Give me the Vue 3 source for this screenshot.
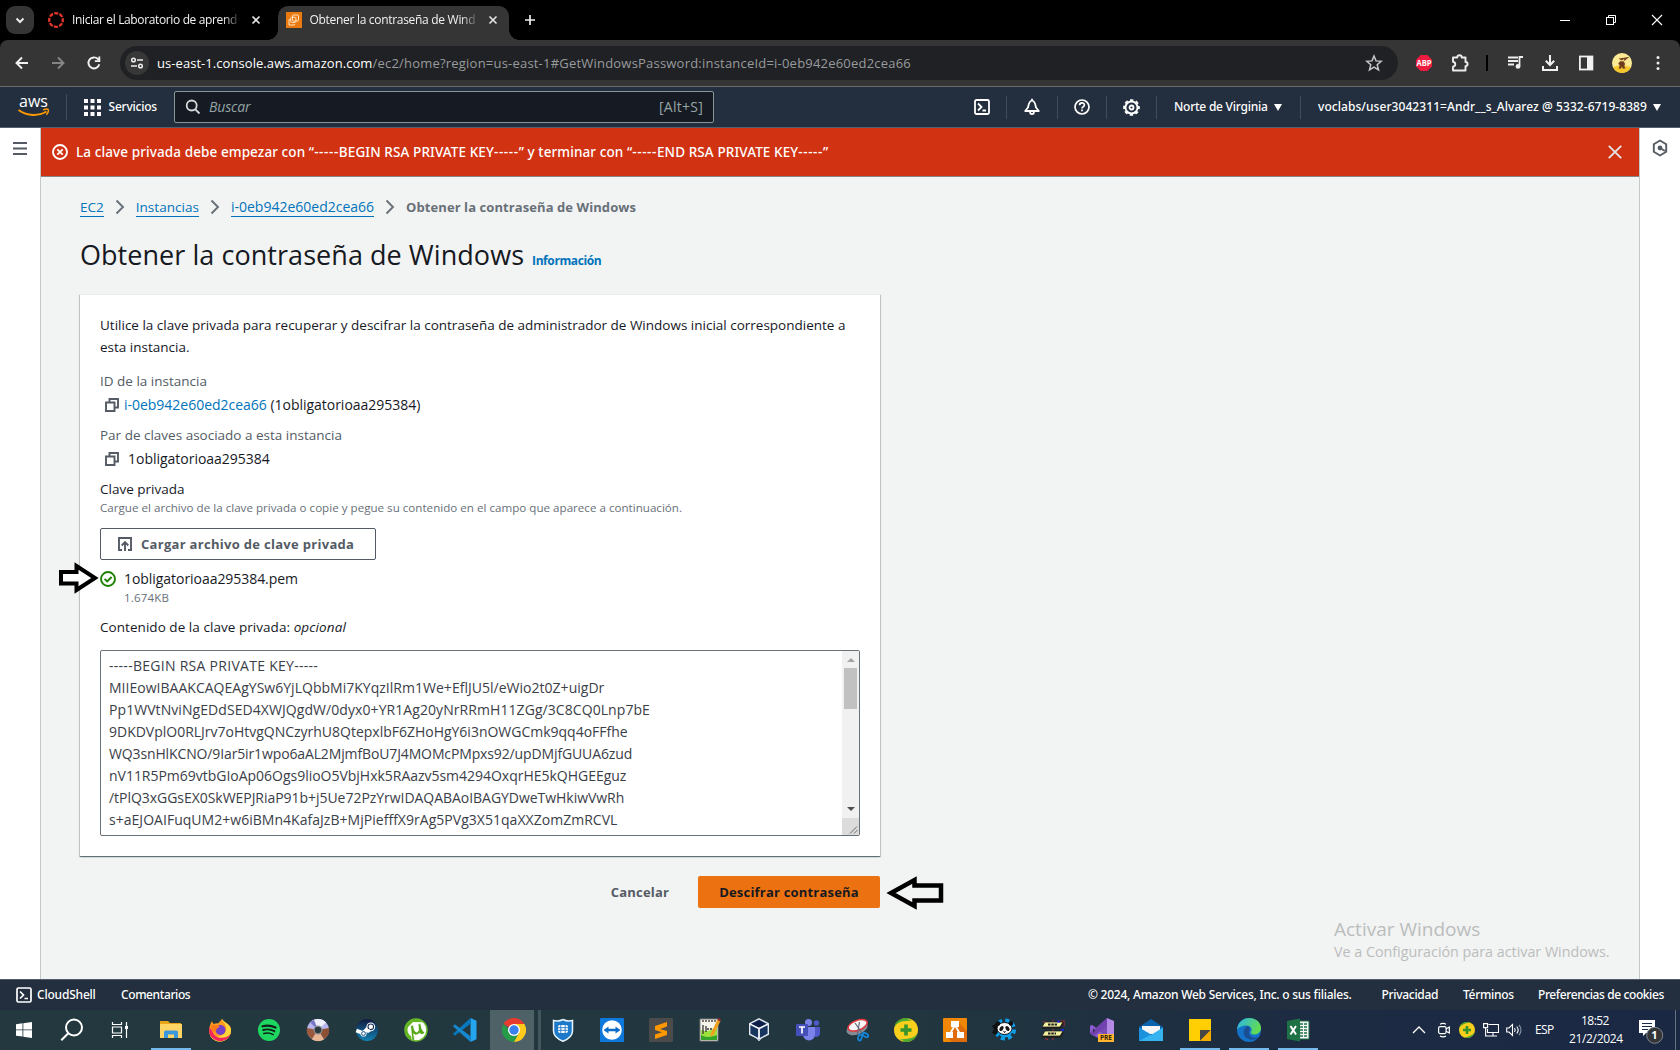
<script setup>
const keyLines = [
  { text: '-----BEGIN RSA PRIVATE KEY-----', track: 0.28 },
  { text: 'MIIEowIBAAKCAQEAgYSw6YjLQbbMi7KYqzIlRm1We+EflJU5l/eWio2t0Z+uigDr', track: 0.02 },
  { text: 'Pp1WVtNviNgEDdSED4XWJQgdW/0dyx0+YR1Ag20yNrRRmH11ZGg/3C8CQ0Lnp7bE', track: 0.07 },
  { text: '9DKDVplO0RLJrv7oHtvgQNCzyrhU8QtepxlbF6ZHoHgY6i3nOWGCmk9qq4oFFfhe', track: -0.01 },
  { text: 'WQ3snHlKCNO/9Iar5ir1wpo6aAL2MjmfBoU7J4MOMcPMpxs92/upDMjfGUUA6zud', track: -0.13 },
  { text: 'nV11R5Pm69vtbGIoAp06Ogs9lioO5VbjHxk5RAazv5sm4294OxqrHE5kQHGEEguz', track: -0.02 },
  { text: '/tPlQ3xGGsEX0SkWEPJRiaP91b+j5Ue72PzYrwIDAQABAoIBAGYDweTwHkiwVwRh', track: -0.04 },
  { text: 's+aEJOAIFuqUM2+w6iBMn4KafaJzB+MjPiefffX9rAg5PVg3X51qaXXZomZmRCVL', track: 0.03 }
]
</script>

<template>
  <div class="screen">
    <!-- Browser tab strip -->
    <div class="tabstrip">
      <div class="tab-search">
        <svg width="28" height="28" viewBox="0 0 28 28"><path d="M10.500 12.500 14 16l3.500-3.500" fill="none" stroke="#e8e8e8" stroke-width="2" /></svg>
      </div>
      <div class="tab idle">
        <svg width="16" height="16" viewBox="0 0 16 16"><circle cx="8" cy="8" r="6.800" fill="none" stroke="#e2352b" stroke-width="2.300" stroke-dasharray="4.100 1.240" stroke-dashoffset="2" /></svg>
        <span class="tab-title">Iniciar el Laboratorio de aprend</span>
        <svg class="tab-x" width="10" height="10" viewBox="0 0 10 10"><path d="m1.500 1.500 7 7m0-7-7 7" stroke="#e6e6e6" stroke-width="1.600" /></svg>
      </div>
      <div class="tab current">
        <svg width="16" height="16" viewBox="0 0 16 16">
          <rect width="16" height="16" fill="#ea7a10" />
          <g fill="none" stroke="#ffe3c0" stroke-width="1"><rect x="6.500" y="3" width="6" height="6" rx=".8" /><rect x="4.700" y="5.200" width="5.200" height="5.200" rx=".8" /><path d="M3.800 7.500H3V13h5.500v-1" /></g>
        </svg>
        <span class="tab-title">Obtener la contraseña de Wind</span>
        <svg class="tab-x" width="10" height="10" viewBox="0 0 10 10"><path d="m1.500 1.500 7 7m0-7-7 7" stroke="#e6e6e6" stroke-width="1.600" /></svg>
      </div>
      <svg class="new-tab" width="12" height="12" viewBox="0 0 12 12"><path d="M6 1v10M1 6h10" stroke="#eee" stroke-width="1.700" /></svg>
      <div class="win-controls">
        <svg width="12" height="12" viewBox="0 0 12 12"><path d="M1 6.500h10" stroke="#fff" /></svg>
        <svg width="12" height="12" viewBox="0 0 12 12" fill="none" stroke="#fff"><rect x="1.500" y="3.500" width="7" height="7" /><path d="M3.500 3.500v-2h7v7h-2" /></svg>
        <svg width="12" height="12" viewBox="0 0 12 12"><path d="m1 1 10 10M11 1 1 11" stroke="#fff" stroke-width="1.100" /></svg>
      </div>
    </div>

    <!-- Browser toolbar -->
    <div class="toolbar-wrap">
      <div class="toolbar">
        <div class="nav-buttons">
          <svg width="16" height="16" viewBox="0 0 16 16" fill="none" stroke="#f1f1f1" stroke-width="1.900"><path d="M14 8H3M8 2.500 2.500 8 8 13.500" /></svg>
          <svg width="16" height="16" viewBox="0 0 16 16" fill="none" stroke="#858585" stroke-width="1.900"><path d="M2 8h11M8 2.500 13.500 8 8 13.500" /></svg>
          <svg width="16" height="16" viewBox="0 0 16 16" fill="none" stroke="#f1f1f1" stroke-width="1.900"><path d="M13.300 9.200A5.500 5.500 0 1 1 12 4.200l1.200 1.300" /><path d="M13.300 1.500v4.600H8.800" /></svg>
        </div>
        <div class="omnibox">
          <span class="site-info">
            <svg width="14" height="14" viewBox="0 0 14 14" fill="none" stroke="#eee" stroke-width="1.500"><circle cx="3.500" cy="4" r="1.800" /><path d="M7 4h6M1 10h6" /><circle cx="10.500" cy="10" r="1.800" /></svg>
          </span>
          <span class="url"><span class="host">us-east-1.console.aws.amazon.com</span><span class="path">/ec2/home?region=us-east-1#GetWindowsPassword:instanceId=i-0eb942e60ed2cea66</span></span>
          <svg width="18" height="18" viewBox="0 0 18 18" fill="none" stroke="#c4c7c9" stroke-width="1.500"><path d="m9 2 2 4.900 5.200.4-4 3.400 1.300 5.200L9 13.100l-4.500 2.800 1.300-5.200-4-3.400L7 6.900z" /></svg>
        </div>
        <div class="extensions">
          <svg width="18" height="18" viewBox="0 0 18 18"><path d="M5.700 1h6.600L17 5.700v6.600L12.300 17H5.700L1 12.300V5.700z" fill="#ee1c3f" /><text x="9" y="11.900" text-anchor="middle" class="abp" textLength="15" lengthAdjust="spacingAndGlyphs">ABP</text></svg>
          <svg class="ext" width="20" height="20" viewBox="0 0 20 20" fill="none" stroke="#ececec" stroke-width="1.900"><path d="M3 4.500h4.300c0-3 4.400-3 4.400 0H15.500V9c2.800.2 2.800 4 0 4.200v4.300H3v-3.800c3-.6 3-4.400 0-4.900z" stroke-linejoin="round" /></svg>
          <i class="ext-sep"></i>
          <svg class="music" width="18" height="18" viewBox="0 0 18 18"><path d="M2 3.500h10M2 7h10M2 10.500h6M13.500 12V3h3.500" fill="none" stroke="#eee" stroke-width="1.800" /><circle cx="12" cy="12.400" r="2.400" fill="#eee" /></svg>
          <svg class="download" width="18" height="18" viewBox="0 0 18 18" fill="none" stroke="#f1f1f1" stroke-width="2"><path d="M9 1v9.500M4.800 6.800 9 11l4.200-4.200M2 12v4h14v-4" /></svg>
          <svg class="panel" width="16" height="16" viewBox="0 0 16 16"><rect x="1.900" y="1.500" width="12.500" height="13" fill="none" stroke="#f1f1f1" stroke-width="1.800" /><path d="M9 1h6v14H9z" fill="#f1f1f1" /></svg>
          <svg class="avatar" width="20" height="20" viewBox="0 0 20 20"><circle cx="10" cy="10" r="10" fill="#fbe993" /><path d="M1 14.300a10 10 0 0 0 18 0C13 12 7 12 1 14.300" fill="#f6c72c" /><path d="m7 5.500 2 1.500h1.500l1.500-1.500.3 2.300L17 4M8 8.500h3.500l1.500 2.500-.8 1.500.8 3h-2l-1-2-1.300 2H7l.8-3L6.500 10.500z" fill="#6f3b1d" stroke="#8b5a2b" stroke-width=".6" /></svg>
          <svg class="menu" width="4" height="16" viewBox="0 0 4 16" fill="#eee"><circle cx="2" cy="2.500" r="1.500" /><circle cx="2" cy="8" r="1.500" /><circle cx="2" cy="13.500" r="1.500" /></svg>
        </div>
      </div>
    </div>

    <!-- Console navigation -->
    <header class="console-nav">
      <div class="logo">
        <svg width="34" height="26" viewBox="0 0 34 26"><text x="16.500" y="13" text-anchor="middle" class="aws" textLength="29" lengthAdjust="spacingAndGlyphs">aws</text><path d="M1.500 16c9 6.300 20 6.300 28 1.500" fill="none" stroke="#f90" stroke-width="2" /><path d="M26 15.800c2.500-.8 5-.8 5.300 0 .3.900-.6 3.500-2 5" fill="none" stroke="#f90" stroke-width="1.400" /></svg>
      </div>
      <div class="services">
        <svg width="17" height="17" viewBox="0 0 17 17" fill="#fff"><path d="M0 0h4v4H0zM6.500 0h4v4h-4zM13 0h4v4h-4zM0 6.500h4v4H0zM6.500 6.500h4v4h-4zM13 6.500h4v4h-4zM0 13h4v4H0zM6.500 13h4v4h-4zM13 13h4v4h-4z" /></svg>
        <span>Servicios</span>
      </div>
      <div class="search">
        <svg width="16" height="16" viewBox="0 0 16 16" fill="none" stroke="#d5dbdb" stroke-width="1.800"><circle cx="6.700" cy="6.500" r="5" /><path d="m10.300 10.300 4.200 4.200" /></svg>
        <em>Buscar</em>
        <span>[Alt+S]</span>
      </div>
      <div class="nav-icons">
        <div class="nav-icon w49"><svg width="16" height="16" viewBox="0 0 16 16" fill="none" stroke="#fff" stroke-width="1.800"><rect x="1" y="1" width="14" height="14" rx="1.500" /><path d="m4 4.500 3.500 3.500L4 11.500M8.500 11.500H12" /></svg></div>
        <div class="nav-icon w51"><svg width="16" height="18" viewBox="0 0 16 18" fill="none" stroke="#fff" stroke-width="1.800" stroke-linejoin="round"><path d="M8 2.500C4.500 3.500 4.500 8 4 9.500L1.200 13h13.600L12 9.500C11.500 8 11.500 3.500 8 2.500z" /><path d="M8 .8v2M6 13.500c0 3.500 4 3.500 4 0" /></svg></div>
        <div class="nav-icon w49"><svg width="16" height="16" viewBox="0 0 16 16" fill="none" stroke="#fff" stroke-width="1.700"><circle cx="8" cy="8" r="7" /><path d="M5.600 6.300C5.600 3 10.400 3.200 10.400 6c0 1.800-2.400 1.700-2.400 3.600M8 10.600v1.700" /></svg></div>
        <div class="nav-icon w50"><svg width="17" height="17" viewBox="0 0 17 17" fill="none" stroke="#fff"><circle cx="8.500" cy="8.500" r="2" stroke-width="1.800" /><circle cx="8.500" cy="8.500" r="6" stroke-width="1.800" /><circle cx="8.500" cy="8.500" r="7.400" stroke-width="1.900" stroke-dasharray="3.300 2.511" stroke-dashoffset="1.650" /></svg></div>
      </div>
      <div class="region"><span>Norte de Virginia</span><i class="caret"></i></div>
      <div class="account"><span>voclabs/user3042311=Andr__s_Alvarez @ 5332-6719-8389</span><i class="caret"></i></div>
    </header>

    <!-- Page -->
    <div class="page">
      <aside class="side left"><svg width="14" height="13" viewBox="0 0 14 13"><path d="M0 1h14M0 6.500h14M0 12h14" stroke="#545b64" stroke-width="1.900" /></svg></aside>
      <main>
        <div class="flash">
          <svg width="16" height="16" viewBox="0 0 16 16" fill="none" stroke="#fff" stroke-width="1.900"><circle cx="8" cy="8" r="7" /><path d="m5.300 5.300 5.400 5.400m0-5.400-5.400 5.400" /></svg>
          <span>La clave privada debe empezar con “<i>-----</i>BEGIN RSA PRIVATE KEY<i>-----</i>” y terminar con “<i>-----</i>END RSA PRIVATE KEY<i>-----</i>”</span>
          <svg class="dismiss" width="14" height="14" viewBox="0 0 14 14"><path d="m.8.8 12.400 12.400m0-12.400L.8 13.200" stroke="#e3e3e3" stroke-width="1.900" /></svg>
        </div>
        <div class="content">
          <nav class="crumbs">
            <a class="c1">EC2</a>
            <svg width="10" height="16" viewBox="0 0 10 16"><path d="m1.500 1.500 6.500 6.500-6.500 6.500" fill="none" stroke="#687078" stroke-width="1.900" /></svg>
            <a class="c2">Instancias</a>
            <svg width="10" height="16" viewBox="0 0 10 16"><path d="m1.500 1.500 6.500 6.500-6.500 6.500" fill="none" stroke="#687078" stroke-width="1.900" /></svg>
            <a class="c3">i-0eb942e60ed2cea66</a>
            <svg width="10" height="16" viewBox="0 0 10 16"><path d="m1.500 1.500 6.500 6.500-6.500 6.500" fill="none" stroke="#687078" stroke-width="1.900" /></svg>
            <b>Obtener la contraseña de Windows</b>
          </nav>
          <div class="heading"><h1>Obtener la contraseña de Windows</h1><a>Información</a></div>

          <section class="card">
            <p class="intro">Utilice la clave privada para recuperar y descifrar la contraseña de administrador de Windows inicial correspondiente a esta instancia.</p>
            <div class="label">ID de la instancia</div>
            <div class="value">
              <svg width="14" height="14" viewBox="0 0 14 14" fill="none" stroke="#545b64" stroke-width="1.900"><path d="M1 4.500h8.500V13H1z" /><path d="M4.500 4.500V1H13v8.500H9.500" /></svg>
              <span><a>i-0eb942e60ed2cea66</a> (1obligatorioaa295384)</span>
            </div>
            <div class="label pair">Par de claves asociado a esta instancia</div>
            <div class="value wide">
              <svg width="14" height="14" viewBox="0 0 14 14" fill="none" stroke="#545b64" stroke-width="1.900"><path d="M1 4.500h8.500V13H1z" /><path d="M4.500 4.500V1H13v8.500H9.500" /></svg>
              <span>1obligatorioaa295384</span>
            </div>
            <div class="field-label">Clave privada</div>
            <div class="hint">Cargue el archivo de la clave privada o copie y pegue su contenido en el campo que aparece a continuación.</div>
            <button class="upload">
              <svg width="14" height="14" viewBox="0 0 14 14" fill="none" stroke="#545b64" stroke-width="1.900"><path d="M4 13H1V1h12v12h-3" /><path d="M7 14V5.500M3.700 8.500 7 5.200l3.300 3.300" /></svg>
              <span>Cargar archivo de clave privada</span>
            </button>
            <div class="file">
              <svg width="16" height="16" viewBox="0 0 16 16" fill="none" stroke="#1d8102" stroke-width="1.900"><circle cx="8" cy="8" r="7" /><path d="m4.600 7.800 2.600 2.600 4.400-4.400" /></svg>
              <div><div class="file-name">1obligatorioaa295384.pem</div><div class="file-size">1.674KB</div></div>
            </div>
            <div class="key-label">Contenido de la clave privada: <em>opcional</em></div>
            <div class="textarea">
              <div class="key"><div v-for="l in keyLines" :key="l.text" :style="{ letterSpacing: l.track + 'px' }">{{ l.text }}</div></div>
              <div class="scroll">
                <i class="up"></i><i class="thumb"></i><i class="down"></i>
                <div class="corner"><svg width="17" height="17" viewBox="0 0 17 17"><path d="m8 15.500 7-7M12 15.500l3.500-3.500" stroke="#6b6b6b" /></svg></div>
              </div>
            </div>
          </section>

          <div class="actions"><button class="cancel">Cancelar</button><button class="primary">Descifrar contraseña</button></div>
        </div>
      </main>
      <aside class="side right"><svg width="16" height="18" viewBox="0 0 16 18"><path d="m8 1.500 6.200 3.700v7.600L8 16.500l-6.200-3.700V5.200z" fill="none" stroke="#545b64" stroke-width="1.900" /><path d="m8 9 5 3" stroke="#545b64" stroke-width="2" /><circle cx="8" cy="9" r="2.400" fill="#545b64" /></svg></aside>
    </div>

    <!-- Console footer -->
    <footer>
      <svg width="16" height="16" viewBox="0 0 16 16" fill="none" stroke="#fff" stroke-width="1.700"><rect x="1" y="1" width="14" height="14" rx="1.500" /><path d="m4 4.500 3.500 3.500L4 11.500M8.500 11.500H12" /></svg>
      <span class="f1">CloudShell</span><span class="f2">Comentarios</span>
      <span class="f3">© 2024, Amazon Web Services, Inc. o sus filiales.</span>
      <span class="f4">Privacidad</span><span class="f5">Términos</span><span class="f6">Preferencias de cookies</span>
    </footer>

    <!-- Windows taskbar -->
    <div class="taskbar">
      <div class="cell sys"><svg width="16" height="16" viewBox="0 0 16 16" fill="#fff"><path d="M0 2.200 6.500 1.300v6.200H0zM7.300 1.200 16 0v7.500H7.300zM0 8.300h6.500v6.300L0 13.700zM7.300 8.300H16V16l-8.700-1.200z" /></svg></div>
      <div class="cell sys"><svg width="24" height="24" viewBox="0 0 24 24" fill="none" stroke="#fff" stroke-width="2"><circle cx="14" cy="9.500" r="8" /><path d="m8.300 15.200-7 7" /></svg></div>
      <div class="cell sys"><svg width="18" height="16" viewBox="0 0 18 16" fill="none" stroke="#fff" stroke-width="1.200"><path d="M1.500 0v2.500h9V0M1.500 16v-2.500h9V16M1.500 5h9v6h-9zM15.500 0v16" /><path d="M14 4h3v3h-3z" fill="#fff" stroke="none" /></svg></div>
      <div class="apps">
        <div class="cell run"><svg width="24" height="24" viewBox="0 0 24 24"><path d="M1 3h8l2 2h11v15H1z" fill="#e8a317" /><path d="M1 6h22v14H1z" fill="#ffd566" /><path d="M5 20v-6q0-1.500 1.500-1.500h11q1.500 0 1.500 1.500v6h-4v-3.500H9V20z" fill="#3c98dd" /></svg></div>
        <div class="cell"><svg width="24" height="24" viewBox="0 0 24 24"><path d="M14 .8c1 4 8.500 4.500 9 11A11 11 0 0 1 1 13c0-3 .8-6 3-10 .5 2 1 2.500 2 3 1.500-1 3-1 4-.5C11 4 13 3 14 .8" fill="#ff9a1f" /><path d="M14 .8c0 4 3.500 4 4 8 2 8-9 12-16 9a11.200 11.200 0 0 0 21-5.800C23 6 16 5 14 .8" fill="#ffd53a" /><path d="M1.300 15c3 10 18 11 21 1-5 6-16 5-18-3L1 9z" fill="#f4255f" /><circle cx="12.500" cy="12" r="5" fill="#7540c8" /><path d="M2.500 8c3-2 6-.5 8-.5 2 .5 0 2.500-1.500 3l-1.500 3c-2 .5-4-2-5-5.500" fill="#ff7a18" /></svg></div>
        <div class="cell"><svg width="24" height="24" viewBox="0 0 24 24"><circle cx="12" cy="12" r="11" fill="#1ed760" /><g fill="none" stroke="#10221a" stroke-linecap="round"><path d="M5.500 8.300c4.500-1.200 9-.8 13 1.200" stroke-width="2.200" /><path d="M6.200 12c3.800-1.100 7.800-.7 11.200 1.200" stroke-width="1.900" /><path d="M6.800 15.500c3.300-.9 6.500-.6 9.400 1.100" stroke-width="1.600" /></g></svg></div>
        <div class="cell"><svg width="24" height="24" viewBox="0 0 24 24"><circle cx="12" cy="12" r="11" fill="#b8b6ed" /><path d="M12 12 4 4.500A11 11 0 0 1 20 4.500z" fill="#f0f0fb" /><path d="m12 12-4-10.300A11 11 0 0 0 4 4.500z" fill="#7774c9" /><path d="M12 12 1 10a11 11 0 0 0 5 11.200z" fill="#9b5a3d" /><path d="m12 12-6 9.200a11 11 0 0 0 12 0z" fill="#e8b692" /><path d="m12 12 6 9.200A11 11 0 0 0 23 10z" fill="#8d4f34" /><circle cx="12" cy="12" r="4.500" fill="#8c8c91" /><circle cx="12" cy="12" r="3.200" fill="#293b41" /></svg></div>
        <div class="cell"><svg width="24" height="24" viewBox="0 0 24 24"><defs><linearGradient id="stm" x1="0" y1="0" x2="0" y2="1"><stop offset="0" stop-color="#11193f" /><stop offset="1" stop-color="#1283b5" /></linearGradient></defs><circle cx="12" cy="12" r="11" fill="url(#stm)" /><path d="m1.300 12.500 7 2.700 4.500-5" fill="none" stroke="#fff" stroke-width="3.800" /><circle cx="15.800" cy="8.800" r="4.400" fill="#fff" /><circle cx="15.800" cy="8.800" r="2.800" fill="#fff" stroke="#172b56" stroke-width="1.100" /><path d="m12 14 3-2" stroke="#fff" stroke-width="3" /><circle cx="8.500" cy="15.500" r="3.100" fill="#fff" /><circle cx="8.500" cy="15.500" r="1.900" fill="none" stroke="#155180" /></svg></div>
        <div class="cell"><svg width="24" height="24" viewBox="0 0 24 24"><circle cx="12" cy="12" r="11" fill="#fff" /><path d="M20 4.300A11 11 0 1 0 9 22.600l-1-3.500A8.200 8.200 0 0 1 4 9l5-5z" fill="#63b41e" /><path d="M6.500 7.500 9.500 7c.3 3.500 1 7 3.300 7 2 0 2-3.500 1-8l3-.5c.5 4 1.300 7.500 4 9-1 2-3.500 2.700-5.300.8-2.300 2.300-5 2.100-5.900.5l1.200 6.400-2.800.3z" fill="#55a817" stroke="#fff" stroke-width=".8" /><circle cx="12" cy="12" r="11" fill="none" stroke="#64b82a" stroke-width="1.500" /></svg></div>
        <div class="cell"><svg width="24" height="24" viewBox="0 0 24 24"><path d="m17.500 0 6 2.700v18.600l-6 2.700z" fill="#25a4ef" /><path d="M17.500 0 0 15.800l1.800 2 15.700-12z" fill="#0778bd" /><path d="M17.500 24 0 8.200l1.800-2 15.700 12z" fill="#1588cf" /></svg></div>
        <div class="cell active"><svg width="24" height="24" viewBox="0 0 24 24"><path d="M12 12 1.600 6A12 12 0 0 1 22.400 6z" fill="#e63b2e" /><path d="M12 12h-5L1.600 6A12 12 0 0 0 12 24l5-9z" fill="#269b49" /><path d="M12 24A12 12 0 0 0 22.400 6H12l5 9z" fill="#ffca1b" /><circle cx="12" cy="12" r="6" fill="#fff" /><circle cx="12" cy="12" r="4.700" fill="#397fee" /></svg></div>
        <div class="cell"><svg width="24" height="24" viewBox="0 0 24 24"><path d="M12 1.500c3 1.600 6.500 1.700 9.500 1V13c0 5-4 8-9.500 10.200C6.500 21 2.500 18 2.500 13V2.500c3 .7 6.500.6 9.500-1" fill="#1c78c9" stroke="#eaf4fa" stroke-width="1.500" /><rect x="7" y="7" width="10" height="8" rx="2" fill="#fff" /><path d="M9.800 7v8M14.200 7v8M7 9.700h10M7 12.300h10" stroke="#1c78c9" stroke-width=".9" /></svg></div>
        <div class="cell"><svg width="24" height="24" viewBox="0 0 24 24"><rect width="24" height="24" rx="1" fill="#0f78dc" /><circle cx="12" cy="12" r="9.800" fill="#fff" /><path d="m3.500 12 5-3.500v2.200h7V8.500l5 3.500-5 3.500v-2.200h-7v2.200z" fill="#0c6dc9" /></svg></div>
        <div class="cell"><svg width="24" height="24" viewBox="0 0 24 24"><rect width="24" height="24" rx="1.500" fill="#4b4b4b" /><path d="m6 8 12-4v4.600l-7 2.300 7 2.200v4L6 21v-4.500l7-2.300-7-2.300z" fill="#ff9800" /></svg></div>
        <div class="cell"><svg width="24" height="24" viewBox="0 0 24 24"><path d="M2 1h18v22H2z" fill="#f5f5ec" stroke="#777" /><path d="M3 12c7 3 10-1 16-2v12H3z" fill="#9de23d" /><path d="M3 17c5 3 11 2 16 0v5H3z" fill="#34a52a" /><path d="M5 2v2M8 2v2M11 2v2M14 2v2M17 2v2M5 7v9M8 8v6" stroke="#333" stroke-width="1.300" /><path d="M9 11h6" stroke="#333" stroke-dasharray="2 1" stroke-width="1.500" /><path d="m19.500 1.500 3 1.500-7 14-3 2 .2-3.500z" fill="#f0a01f" /><path d="m20.500 0 2.500 1.500-1 2-2.500-1.500z" fill="#9a2a2a" /></svg></div>
        <div class="cell"><svg width="24" height="24" viewBox="0 0 24 24"><path d="m8 18 4 5 4-5" fill="#6986b6" stroke="#bdc9df" /><path d="m12 .8 9.300 4.800v10.600L12 21l-9.300-4.800V5.600z" fill="#17345f" stroke="#e4e8f1" stroke-width="1.400" /><path d="m3 6 9 4.600L21 6M12 10.600V21" fill="none" stroke="#f4f5fa" stroke-width="1.800" /><path d="m5 6 7-3.500L19 6l-7 3.200z" fill="#0c1e45" /></svg></div>
        <div class="cell"><svg width="24" height="24" viewBox="0 0 24 24"><circle cx="12.500" cy="4.500" r="3.500" fill="#7b83eb" /><circle cx="20.500" cy="5" r="2.700" fill="#5059c9" /><path d="M17 9h7v6.500a4 4 0 0 1-7 2z" fill="#5059c9" /><path d="M7 9h12v7.500a6 6 0 0 1-12 0z" fill="#7b83eb" /><rect y="6" width="12" height="12" rx="1" fill="#454fba" /><path d="M3 9h6M6 9v6.500" stroke="#fff" stroke-width="1.700" /></svg></div>
        <div class="cell"><svg width="24" height="24" viewBox="0 0 24 24"><ellipse cx="11.500" cy="10.500" rx="11" ry="5.900" transform="rotate(-20 12 9)" fill="#858b93" /><ellipse cx="12.500" cy="7.500" rx="10" ry="4.900" transform="rotate(-20 12 7)" fill="#f7f7f7" stroke="#dd3a3f" stroke-width="1.600" /><path d="m10 5 7 10M14.500 4l-2 12" stroke="#667" stroke-width="1.200" /><g fill="none" stroke="#1684d6" stroke-width="1.800"><ellipse cx="15" cy="19.500" rx="1.800" ry="3" transform="rotate(15 15 19.500)" /><ellipse cx="20.500" cy="17" rx="3" ry="1.700" transform="rotate(30 20.500 17)" /></g></svg></div>
        <div class="cell"><svg width="24" height="24" viewBox="0 0 24 24"><circle cx="12" cy="12" r="12" fill="#f7cf1c" /><path d="M.5 9C2 2 10-2 17 1.200 11 1 4 3 .5 9M23.500 15C22 22 14 26 7 22.800 13 23 20 21 23.500 15" fill="#3a9e2c" /><path d="M3 5c4-5 11-5 15-2-5-.5-10 .5-15 2M21 19c-4 5-11 5-15 2 5 .5 10-.5 15-2" fill="#4cae36" /><path d="M12 6.500v11M6.500 12h11" stroke="#35942c" stroke-width="3.600" /></svg></div>
        <div class="cell"><svg width="24" height="24" viewBox="0 0 24 24"><rect width="24" height="24" rx="1" fill="#f08705" /><path d="m15 4 9 9v11H9l-6-6z" fill="#df6c0c" /><path d="m12 7-5 9M12 7l5 9" stroke="#fff" stroke-width="1.800" /><path d="M8 3h8v6H8zM3 14h7v6H3zM14 14h7v6h-7z" fill="#fff" /></svg></div>
        <div class="cell"><svg width="24" height="24" viewBox="0 0 24 24"><circle cx="13" cy="11.500" r="9" fill="none" stroke="#0d9fe8" stroke-width="4" stroke-dasharray="4 3.068" /><circle cx="13" cy="12" r="7.500" fill="#0d9fe8" /><path d="M0 8 5 5l3 6-4 6-4-2 2-4zM23 6l-3-2" fill="#111" /><ellipse cx="12.500" cy="10.500" rx="7.500" ry="6" fill="#f8f8f8" stroke="#111" /><circle cx="6" cy="5.500" r="2.300" fill="#111" /><circle cx="19" cy="5.500" r="2.200" fill="#111" /><ellipse cx="9.500" cy="10.500" rx="1.800" ry="2.700" transform="rotate(35 9.500 10.500)" fill="#161616" /><ellipse cx="15.500" cy="10.500" rx="1.800" ry="2.700" transform="rotate(-35 15.500 10.500)" fill="#161616" /><path d="m11.500 13.500 1 1 1-1" stroke="#111" /></svg></div>
        <div class="cell"><svg width="24" height="24" viewBox="0 0 24 24"><path d="M12 2v20M2 4h4M18 3h5v5M4 20l3 2" stroke="#a42d3b" stroke-width="1.200" /><path d="M4 5h19l-3 6H1zM4 14h19l-3 6H1z" fill="#222" /><path d="M4 4h18l-3 5H1zM4 13h18l-3 5H1z" fill="#f4f1a0" stroke="#111" stroke-width=".7" /><path d="M7 6.500h9M7 15.500h8" stroke="#222" stroke-width="2" stroke-dasharray="2.500 .8" /><path d="M16 2.500h3v2h-3zM20 11h3v2h-3z" fill="#1822cf" /></svg></div>
        <div class="cell"><svg width="24" height="24" viewBox="0 0 24 24"><path d="m17 0 7 3v18l-7 3z" fill="#b58ae6" /><path d="M17 0 1.500 16 0 15V8l2-1 15 11z" fill="#7a4bb4" /><path d="M0 8l2-1 15 11v6L2 17l-2-2z" fill="#8e5bd0" /><path d="M17 0v8L4 18l-4-3z" fill="#7242ae" /><path d="M3 10.500v4l2-2z" fill="#22333f" /><rect x="8" y="16" width="16" height="8" fill="#ffb52e" /><text x="16" y="22.400" text-anchor="middle" class="pre">PRE</text></svg></div>
        <div class="cell"><svg width="24" height="24" viewBox="0 0 24 24"><path d="M0 9 12 1l12 8v14H0z" fill="#0b63ad" /><path d="M3 8h18v8H3z" fill="#f5f5f5" /><path d="m0 9.500 12 7.500L24 9.500V23H0z" fill="#35b4ef" /><path d="m0 23 12-6.500L0 9.500z" fill="#1d92dc" /></svg></div>
        <div class="cell run"><svg width="24" height="24" viewBox="0 0 24 24"><path d="M1 1h22v22H1z" fill="#ffcf03" /><path d="M12 23V12h11z" fill="#464646" /><path d="M12 23 23 12v11z" fill="#f5ac00" /></svg></div>
        <div class="cell run"><svg width="24" height="24" viewBox="0 0 24 24"><defs><linearGradient id="edg" x1="0" y1="0" x2="1" y2=".4"><stop offset="0" stop-color="#2bb6ea" /><stop offset="1" stop-color="#62db52" /></linearGradient></defs><circle cx="12" cy="12" r="12" fill="#1472c8" /><path d="M.3 10C2 3 7 0 12.500 0 20 0 24 5.500 24 10c0 4-3 6.500-7 6.500-3 0-4-1.500-3-3 2-3-1-6-4.500-6C5 7.500 1.500 9 .3 12z" fill="url(#edg)" /><path d="M10 8c-5 3-5 12 3 13.500 4 .8 7-.5 9.200-2.500-4 1.600-9.700.5-10.200-3.500-.2-2 .2-3 1-4C13 10 12 8 10 8" fill="#1a4f94" /></svg></div>
        <div class="cell run"><svg width="24" height="24" viewBox="0 0 24 24"><path d="M12 3h11v18H12z" fill="#f4f7f5" stroke="#1f7346" stroke-width="1" /><path d="M14 6h7M14 9h7M14 12h7M14 15h7M14 18h7" stroke="#1f7346" stroke-width="1.600" /><path d="M17.500 4v16" stroke="#f4f7f5" /><path d="m1 3 13-2.500v23L1 21z" fill="#1e7145" /><path d="m4.500 8 5.500 8.500M10 8l-5.500 8.500" stroke="#fff" stroke-width="2" /></svg></div>
      </div>
      <div class="tray">
        <svg class="t1" width="14" height="8" viewBox="0 0 14 8"><path d="m1 7 6-6 6 6" fill="none" stroke="#fff" stroke-width="1.300" /></svg>
        <svg class="t2" width="14" height="16" viewBox="0 0 14 16" fill="none" stroke="#fff" stroke-width="1.200"><rect x="1.600" y="4.600" width="7.500" height="7" rx="1.500" /><path d="m9 7 3.300-2v6L9 9.300M3 2.200q3-1.700 6 0M3 14q3 1.700 6 0" /></svg>
        <svg class="t3" width="16" height="16" viewBox="0 0 24 24"><circle cx="12" cy="12" r="12" fill="#f7cf1c" /><path d="M.5 9C2 2 10-2 17 1.200 11 1 4 3 .5 9M23.500 15C22 22 14 26 7 22.800 13 23 20 21 23.500 15" fill="#3a9e2c" /><path d="M12 6v12M6 12h12" stroke="#35942c" stroke-width="4" /></svg>
        <svg class="t4" width="16" height="14" viewBox="0 0 16 14" fill="none" stroke="#fff" stroke-width="1.100"><path d="M5.500 1.500h10v8H4.500V6M10 9.500V13M6 13h8M.6.6h4v4h-4zM2.600 4.600V13H6" /></svg>
        <svg class="t5" width="17" height="14" viewBox="0 0 17 14" fill="none" stroke="#fff" stroke-width="1.100"><path d="M.7 5v4H3l3.500 3.500v-11L3 5zM8.500 5q1.500 2 0 4" /><path d="M10.700 3.500q3 3.500 0 7" /><path d="M13 1.800q4 5.200 0 10.400" stroke="#8b95a2" /></svg>
        <span class="lang">ESP</span>
        <div class="clock"><div>18:52</div><div class="date">21/2/2024</div></div>
        <div class="notif">
          <svg width="26" height="26" viewBox="0 0 26 26"><path d="M1 2h16v13H8l-3 3v-3H1z" fill="#fff" /><path d="M4 5.500h10M4 8.500h10M4 11.500h6" stroke="#1c2942" /><circle cx="16.700" cy="17.300" r="8" fill="#333539" stroke="#84888c" /><text x="16.500" y="21.300" text-anchor="middle" class="badge">1</text></svg>
        </div>
        <i class="show-desktop"></i>
      </div>
    </div>

    <!-- Overlays -->
    <svg class="arrow arrow-file" width="42" height="32" viewBox="0 0 42 32"><path d="M3 10h15.500V4L37 16 18.500 28v-6.500H3z" fill="#fff" stroke="#000" stroke-width="4" /></svg>
    <svg class="arrow arrow-submit" width="60" height="34" viewBox="0 0 60 34"><path d="M55 9.500H28.500V4L5 17l23.500 13v-5.500H55z" fill="#f2f3f3" stroke="#000" stroke-width="4.500" /></svg>
    <div class="watermark"><div class="wm1">Activar Windows</div><div class="wm2">Ve a Configuración para activar Windows.</div></div>
  </div>
</template>

<style>
body { margin: 0; background: #000; overflow: hidden; }
</style>

<style scoped>
* { box-sizing: border-box; }
svg { flex: none; display: block; }
.screen { position: relative; width: 1680px; height: 1050px; display: flex; flex-direction: column; font: 13.5px/22px 'Open Sans', sans-serif; color: #16191f; white-space: nowrap; overflow: hidden; }

.tabstrip { height: 40px; background: #000; display: flex; align-items: flex-start; color: #f1f1f1; }
.tab-search { width: 28px; height: 28px; margin: 6px 14px 0 6px; border-radius: 9px; background: #353535; }
.tab { display: flex; align-items: center; height: 34px; margin-top: 6px; padding-bottom: 6px; }
.idle { width: 230px; }
.current { position: relative; width: 231px; padding-left: 8px; background: #353535; border-radius: 10px 10px 0 0; }
.current::before, .current::after { content: ''; position: absolute; bottom: 0; width: 10px; height: 10px; }
.current::before { left: -10px; background: radial-gradient(circle at 0 0, transparent 9.5px, #353535 10px); }
.current::after { right: -10px; background: radial-gradient(circle at 100% 0, transparent 9.5px, #353535 10px); }
.tab-title { width: 168px; margin-left: 8px; font-size: 12px; letter-spacing: -.36px; line-height: 20px; -webkit-mask-image: linear-gradient(90deg, #000 90%, transparent 101%); mask-image: linear-gradient(90deg, #000 90%, transparent 101%); }
.current .tab-title { letter-spacing: -.3px; margin-left: 7.5px; }
.tab-x { margin-left: 10.5px; }
.new-tab { margin: 14px 0 0 15px; }
.win-controls { display: flex; gap: 34px; margin: 14px 17px 0 auto; }

.toolbar-wrap { height: 47px; background: #000; }
.toolbar { height: 47px; background: #353535; border-radius: 8px 8px 0 0; border-bottom: 1px solid #6a6a6a; display: flex; align-items: center; }
.nav-buttons { display: flex; gap: 20px; margin-left: 14px; width: 106px; }
.omnibox { width: 1278px; height: 34px; border-radius: 17px; background: #202124; display: flex; align-items: center; padding: 0 15px 0 5px; }
.site-info { width: 24px; height: 24px; border-radius: 12px; background: #373737; display: flex; align-items: center; justify-content: center; }
.url { flex: 1; margin-left: 8px; font-size: 13px; }
.host { color: #fff; letter-spacing: .06px; }
.path { color: #989b9e; letter-spacing: .21px; }
.extensions { display: flex; align-items: center; margin-left: 17px; }
.abp { font: 700 8px 'Open Sans', sans-serif; fill: #fff; }
.ext { margin-left: 17px; }
.ext-sep { width: 2px; height: 16px; background: #000; margin-left: 16px; }
.music { margin-left: 17.5px; }
.download { margin-left: 17.5px; }
.panel { margin-left: 19px; }
.avatar { margin-left: 18px; }
.menu { margin-left: 24px; }

.console-nav { height: 41px; background: #232f3e; border-bottom: 1px solid #56606c; display: flex; align-items: center; color: #fff; font: 500 12px/20px 'Noto Sans', sans-serif; }
.logo { width: 67px; height: 26px; padding-left: 17px; border-right: 1px solid #414d5c; }
.aws { font: 400 16px/1 'Open Sans', sans-serif; fill: #fff; }
.services { display: flex; align-items: center; gap: 8px; width: 107px; padding-left: 16.5px; letter-spacing: -.22px; }
.search { width: 540px; height: 32px; border: 1px solid #879596; border-radius: 2px; background: #161a22; display: flex; align-items: center; padding: 0 10px; color: #95a5a6; font: 14px/20px 'Open Sans', sans-serif; }
.search em { margin-left: 8px; letter-spacing: -.15px; }
.search span { margin-left: auto; letter-spacing: .25px; }
.nav-icons { display: flex; margin-left: 243.5px; }
.nav-icon { height: 23px; border-right: 1px solid #414d5c; display: flex; align-items: center; justify-content: center; }
.w49 { width: 49px; }
.w51 { width: 51px; }
.w50 { width: 50px; }
.region { display: flex; align-items: center; gap: 6.5px; width: 144px; height: 23px; padding-left: 17.5px; border-right: 1px solid #414d5c; letter-spacing: -.24px; }
.account { display: flex; align-items: center; gap: 6px; margin-left: 17.5px; letter-spacing: .06px; }
.caret { border: 4px solid transparent; border-top: 7px solid #fff; border-bottom: 0; }

.page { height: 851px; display: flex; background: #fff; }
.side { background: #fff; width: 40px; }
.left { width: 41px; border-right: 1px solid #c3c8cb; padding: 14px 0 0 13px; }
.right { padding: 11px 0 0 12px; }
main { flex: 1; background: #f2f3f3; border-right: 1px solid #c3c8cb; }
.flash { height: 49px; background: #d13212; border-bottom: 1px solid #8a8581; display: flex; align-items: center; padding: 0 17px 0 11px; color: #fff; font: 500 13.5px/22px 'Noto Sans', sans-serif; }
.flash span { margin-left: 8px; letter-spacing: .1px; }
.flash i { font-style: normal; letter-spacing: .6px; }
.dismiss { margin-left: auto; }
.content { padding: 19px 0 0 39px; }
.crumbs { display: flex; align-items: center; height: 22px; }
.crumbs a { color: #0073bb; border-bottom: 1px solid #0073bb; line-height: 20px; height: 20px; }
.crumbs svg { margin: 0 11px; }
.crumbs b { color: #687078; font-size: 13px; letter-spacing: .08px; }
.crumbs .c2 { letter-spacing: .03px; }
.c3 { font-size: 14px; }
.heading { display: flex; align-items: baseline; margin: 19px 0 0; height: 57px; }
h1 { margin: 0; font: 400 27px/36px 'Open Sans', sans-serif; letter-spacing: .05px; }
.heading a { margin-left: 8px; font: 700 12px/18px 'Open Sans', sans-serif; color: #0073bb; letter-spacing: -.4px; }

.card { width: 800px; height: 562px; padding: 20px; background: #fff; border-top: 1px solid #eaeded; box-shadow: 0 1px 1px rgba(0, 28, 36, .45), 1px 1px 1px rgba(0, 28, 36, .15), -1px 1px 1px rgba(0, 28, 36, .15); }
.intro { margin: -1px 0 12px; width: 755px; white-space: normal; }
.label { color: #545b64; }
.pair { margin-top: 8px; }
.value { display: flex; align-items: center; height: 22px; margin-top: 2px; padding-left: 5px; font-size: 14px; }
.value span { margin-left: 5px; letter-spacing: -.02px; }
.value a { color: #0073bb; }
.wide span { margin-left: 9px; }
.field-label { margin-top: 8px; }
.hint { font-size: 11.6px; line-height: 16px; color: #687078; letter-spacing: .01px; }
.upload { display: flex; align-items: center; width: 276px; height: 32px; margin-top: 12px; padding: 0 17px; background: #fff; border: 1px solid #545b64; border-radius: 2px; color: #545b64; font: 700 13px/20px 'Open Sans', sans-serif; }
.upload span { margin-left: 9px; letter-spacing: .3px; }
.file { display: flex; margin-top: 8px; }
.file svg { margin: 3px 8px 0 0; }
.file-name { font-size: 14px; letter-spacing: -.05px; }
.file-size { font-size: 11.5px; line-height: 16px; color: #687078; letter-spacing: .2px; }
.key-label { margin-top: 10px; letter-spacing: .05px; }
.key-label em { letter-spacing: .12px; }
.textarea { display: flex; width: 760px; height: 186px; margin-top: 12px; border: 1px solid #687078; border-radius: 2px; overflow: hidden; }
.key { flex: 1; padding: 4px 0 0 8px; font-size: 14px; line-height: 22px; color: #3b4048; }
.scroll { width: 17px; background: #f1f1f1; display: flex; flex-direction: column; align-items: center; }
.up { border: 4px solid transparent; border-bottom: 4px solid #a3a3a3; border-top: 0; margin-top: 7px; }
.thumb { width: 13px; height: 41px; margin-top: 6px; background: #c1c1c1; }
.down { border: 4px solid transparent; border-top: 4px solid #505050; border-bottom: 0; margin-top: auto; margin-bottom: 7px; }
.corner { width: 17px; height: 17px; background: #dcdcdc; }
.actions { display: flex; justify-content: flex-end; width: 800px; margin-top: 20px; gap: 9px; }
button { font: 700 13px/20px 'Open Sans', sans-serif; }
.cancel { border: 0; background: none; width: 98px; padding: 0; color: #545b64; letter-spacing: .2px; }
.primary { width: 182px; height: 32px; padding: 0; border: 0; border-radius: 2px; background: #ec7211; color: #16191f; letter-spacing: .2px; }

footer { height: 31px; background: #232f3e; border-top: 1px solid #535c67; display: flex; align-items: center; padding-left: 16px; color: #fff; font: 500 12px/20px 'Noto Sans', sans-serif; }
.f1 { width: 84px; margin-left: 5px; letter-spacing: -.2px; }
.f2 { letter-spacing: -.4px; }
.f3 { width: 293.5px; margin-left: auto; letter-spacing: -.24px; }
.f4 { width: 81.5px; letter-spacing: -.3px; }
.f5 { width: 75px; letter-spacing: -.3px; }
.f6 { width: 142px; letter-spacing: -.4px; }

.taskbar { height: 40px; display: flex; background: linear-gradient(90deg, #23393f, #21363f 55%, #1c2a42 80%, #1a2844); color: #fff; }
.cell { width: 49px; height: 40px; display: flex; align-items: center; justify-content: center; position: relative; }
.sys { width: 48px; }
.apps { display: flex; margin-left: 2px; }
.run::after { content: ''; position: absolute; left: 5px; right: 4px; bottom: 0; height: 2px; background: #76b9ed; }
.active::before { content: ''; position: absolute; left: 1px; top: 0; width: 44px; height: 40px; background: #4d6167; }
.active::after { content: ''; position: absolute; left: 1px; top: 0; width: 48px; height: 40px; border-bottom: 2px solid #76b9ed; border-right: 3px solid #43565d; }
.active svg { position: relative; }
.pre { font: 700 6.5px 'Open Sans', sans-serif; fill: #33220a; }
.tray { display: flex; align-items: center; margin-left: auto; height: 40px; font: 12px/18px 'Open Sans', sans-serif; }
.t2 { margin-left: 11px; }
.t3 { margin-left: 8.5px; }
.t4 { margin-left: 8px; }
.t5 { margin-left: 7px; }
.lang { width: 34px; margin-left: 12px; letter-spacing: -.6px; }
.clock { width: 52px; text-align: center; letter-spacing: -.55px; }
.date { letter-spacing: -.35px; }
.notif { margin: 2px 0 0 17px; width: 37px; }
.badge { font: 700 11px 'Open Sans', sans-serif; fill: #fff; }
.show-desktop { width: 5px; height: 40px; border-left: 1px solid #66717f; }

.arrow { position: absolute; }
.arrow-file { left: 58px; top: 562px; }
.arrow-submit { left: 886px; top: 876px; }
.watermark { position: absolute; left: 1334px; top: 917px; color: #bbbdbd; }
.wm1 { font-size: 19px; line-height: 25px; }
.wm2 { font-size: 14.3px; line-height: 20px; }
</style>
